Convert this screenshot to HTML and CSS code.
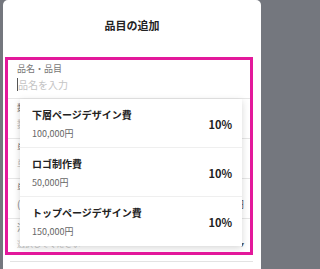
FILE: index.html
```html
<!DOCTYPE html>
<html lang="ja">
<head>
<meta charset="utf-8">
<title>品目の追加</title>
<link rel="stylesheet" href="styles.css">
</head>
<body>
<div class="dialog">
  <div class="dialog-header">品目の追加</div>
  <div class="form-box">
    <div class="field">
      <div class="label">品名・品目</div>
      <div class="input"><span class="caret"></span><span class="placeholder">品名を入力</span></div>
    </div>
    <div class="field">
      <div class="label">数量</div>
      <div class="input"><span class="placeholder">数量を入力</span></div>
    </div>
    <div class="field">
      <div class="label">単位</div>
      <div class="input"><span class="placeholder">単位を入力</span></div>
    </div>
    <div class="field">
      <div class="label">単価</div>
      <div class="input split"><span class="placeholder dark">(</span><span class="unit">円</span></div>
    </div>
    <div class="field last">
      <div class="label">消費税</div>
      <div class="input split"><span class="placeholder small">選択してください</span><span class="arrow">▾</span></div>
    </div>

    <div class="dropdown">
      <div class="option">
        <div class="option-text">
          <div class="option-name">下層ページデザイン費</div>
          <div class="option-price">100,000円</div>
        </div>
        <div class="option-rate">10%</div>
      </div>
      <div class="option">
        <div class="option-text">
          <div class="option-name">ロゴ制作費</div>
          <div class="option-price">50,000円</div>
        </div>
        <div class="option-rate">10%</div>
      </div>
      <div class="option">
        <div class="option-text">
          <div class="option-name">トップページデザイン費</div>
          <div class="option-price">150,000円</div>
        </div>
        <div class="option-rate">10%</div>
      </div>
    </div>
  </div>
  <div class="footer-line"></div>
</div>
</body>
</html>
```

FILE: styles.css
```css
* { box-sizing: border-box; }
html, body { margin: 0; padding: 0; }
body {
  width: 263px;
  height: 269px;
  overflow: hidden;
  background: #74777e;
  font-family: "Noto Sans CJK JP", "Noto Sans", sans-serif;
}
.dialog {
  margin-left: 3px;
  width: 258px;
  height: 269px;
  background: #ffffff;
  border-radius: 5px 5px 0 0;
  overflow: hidden;
}
.dialog-header {
  height: 57px;
  padding-bottom: 7px;
  display: flex;
  align-items: center;
  justify-content: center;
  font-size: 11px;
  font-weight: 700;
  color: #222;
}
.form-box {
  position: relative;
  margin-left: 2px;
  width: 248px;
  height: 198px;
  border: 3px solid #e3189b;
  overflow: hidden;
}
.field {
  height: 40px;
  padding: 3px 0 0 9px;
  border-bottom: 1px solid #e6e6e6;
}
.field:first-child { height: 39px; }
.field.last { border-bottom: none; }
.label {
  font-size: 9px;
  line-height: 12px;
  color: #777;
}
.input {
  position: relative;
  margin-top: 1px;
  height: 16px;
  display: flex;
  align-items: center;
  font-size: 10px;
  color: #333;
}
.input.split {
  justify-content: space-between;
  padding-right: 6px;
}
.caret {
  width: 1px;
  height: 13px;
  background: #555;
  margin-right: 0;
}
.placeholder { color: #c4c4c4; }
.placeholder.dark { color: #888; }
.placeholder.small { font-size: 8px; }
.unit { color: #555; font-size: 10px; }
.arrow { color: #555; font-size: 8px; }
.footer-line {
  margin: 6px 8px 0 7px;
  height: 1px;
  background: #e3e3e3;
}
.dropdown {
  position: absolute;
  left: 12px;
  top: 39px;
  width: 222px;
  background: #fff;
  box-shadow: 0 2px 7px rgba(0, 0, 0, 0.16);
}
.option {
  height: 49px;
  display: flex;
  align-items: center;
  justify-content: space-between;
  padding: 0 10px 0 12px;
  border-bottom: 1px solid #efefef;
}
.option:last-child { border-bottom: none; }
.option-text {
  display: flex;
  flex-direction: column;
  gap: 6px;
  padding-top: 1px;
}
.option-name {
  font-size: 10px;
  line-height: 14px;
  font-weight: 700;
  color: #222;
}
.option-price {
  font-size: 9px;
  line-height: 12px;
  color: #666;
}
.option-rate {
  font-size: 11px;
  font-weight: 700;
  color: #222;
  padding-top: 1px;
}
```
